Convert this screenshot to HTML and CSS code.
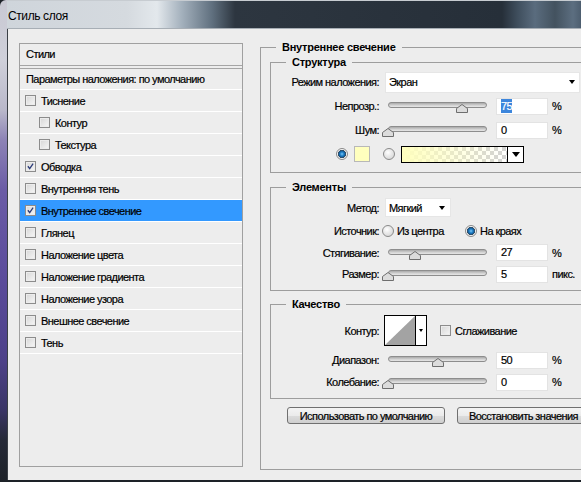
FILE: index.html
```html
<!DOCTYPE html>
<html lang="ru">
<head>
<meta charset="utf-8">
<title>Стиль слоя</title>
<link rel="stylesheet" href="styles.css">
</head>
<body>
<div class="window">
  <div class="frame-left"></div>
  <div class="main">
    <div class="titlebar"><span class="title">Стиль слоя</span></div>
    <div class="client">
      <div class="styles-panel">
        <div class="styles-head">Стили</div>
        <ul class="styles-list">
          <li class="row blend">Параметры наложения: по умолчанию</li>
          <li class="row"><span class="cb"></span>Тиснение</li>
          <li class="row sub"><span class="cb"></span>Контур</li>
          <li class="row sub"><span class="cb"></span>Текстура</li>
          <li class="row"><span class="cb"><svg viewBox="0 0 11 11"><path d="M2.3 5.2l2.2 2.8 4.2-6"/></svg></span>Обводка</li>
          <li class="row"><span class="cb"></span>Внутренняя тень</li>
          <li class="row selected"><span class="cb"><svg viewBox="0 0 11 11"><path d="M2.3 5.2l2.2 2.8 4.2-6"/></svg></span>Внутреннее свечение</li>
          <li class="row"><span class="cb"></span>Глянец</li>
          <li class="row"><span class="cb"></span>Наложение цвета</li>
          <li class="row"><span class="cb"></span>Наложение градиента</li>
          <li class="row"><span class="cb"></span>Наложение узора</li>
          <li class="row"><span class="cb"></span>Внешнее свечение</li>
          <li class="row"><span class="cb"></span>Тень</li>
        </ul>
      </div>

      <fieldset class="effect">
        <legend>Внутреннее свечение</legend>

        <fieldset class="group structure">
          <legend>Структура</legend>
          <div class="frow">
            <span class="lbl">Режим наложения:</span>
            <div class="select wide"><span>Экран</span><i class="arrow"></i></div>
          </div>
          <div class="frow">
            <span class="lbl">Непрозр.:</span>
            <div class="slider" style="--v:75"><div class="track"></div><svg class="thumb" viewBox="0 0 12 9"><path d="M6 .5l5.5 4v4H.5v-4z"/></svg></div>
            <div class="num"><span class="hl">75</span></div>
            <span class="unit">%</span>
          </div>
          <div class="frow">
            <span class="lbl">Шум:</span>
            <div class="slider" style="--v:0"><div class="track"></div><svg class="thumb" viewBox="0 0 12 9"><path d="M6 .5l5.5 4v4H.5v-4z"/></svg></div>
            <div class="num">0</div>
            <span class="unit">%</span>
          </div>
          <div class="frow colors">
            <span class="radio on"></span>
            <span class="swatch"></span>
            <span class="radio gap"></span>
            <div class="grad"><div class="grad-fill"></div><div class="grad-drop"><i class="arrow big"></i></div></div>
          </div>
        </fieldset>

        <fieldset class="group elements">
          <legend>Элементы</legend>
          <div class="frow">
            <span class="lbl">Метод:</span>
            <div class="select short"><span>Мягкий</span><i class="arrow"></i></div>
          </div>
          <div class="frow">
            <span class="lbl">Источник:</span>
            <label class="opt first"><span class="radio"></span><span class="opt-text">Из центра</span></label>
            <label class="opt"><span class="radio on"></span><span class="opt-text">На краях</span></label>
          </div>
          <div class="frow">
            <span class="lbl">Стягивание:</span>
            <div class="slider" style="--v:27"><div class="track"></div><svg class="thumb" viewBox="0 0 12 9"><path d="M6 .5l5.5 4v4H.5v-4z"/></svg></div>
            <div class="num">27</div>
            <span class="unit">%</span>
          </div>
          <div class="frow">
            <span class="lbl">Размер:</span>
            <div class="slider" style="--v:0"><div class="track"></div><svg class="thumb" viewBox="0 0 12 9"><path d="M6 .5l5.5 4v4H.5v-4z"/></svg></div>
            <div class="num">5</div>
            <span class="unit">пикс.</span>
          </div>
        </fieldset>

        <fieldset class="group quality">
          <legend>Качество</legend>
          <div class="frow">
            <span class="lbl">Контур:</span>
            <div class="contour">
              <svg class="curve" viewBox="0 0 30 29"><path d="M0 29L30 0v29z"/></svg>
              <div class="contour-drop"><i class="arrow tiny"></i></div>
            </div>
            <span class="cb smooth"></span>
            <span class="cb-text">Сглаживание</span>
          </div>
          <div class="frow">
            <span class="lbl">Диапазон:</span>
            <div class="slider" style="--v:50"><div class="track"></div><svg class="thumb" viewBox="0 0 12 9"><path d="M6 .5l5.5 4v4H.5v-4z"/></svg></div>
            <div class="num">50</div>
            <span class="unit">%</span>
          </div>
          <div class="frow">
            <span class="lbl">Колебание:</span>
            <div class="slider" style="--v:0"><div class="track"></div><svg class="thumb" viewBox="0 0 12 9"><path d="M6 .5l5.5 4v4H.5v-4z"/></svg></div>
            <div class="num">0</div>
            <span class="unit">%</span>
          </div>
        </fieldset>

        <div class="buttons">
          <button class="btn default">Использовать по умолчанию</button>
          <button class="btn reset">Восстановить значения</button>
        </div>
      </fieldset>
    </div>
  </div>
</div>
</body>
</html>
```

FILE: styles.css
```css
* { box-sizing: border-box; }

html, body { margin: 0; padding: 0; }

body {
  width: 581px;
  height: 482px;
  overflow: hidden;
  background: #1d2228;
  font-family: "Liberation Sans", Arial, sans-serif;
  font-size: 11px;
  letter-spacing: -0.55px;
  color: #000;
  -webkit-text-stroke: 0.2px #000;
}

.window {
  display: flex;
  width: 581px;
  height: 482px;
}

/* Aero frame strip on the left edge */
.frame-left {
  width: 7px;
  flex: none;
  border-top-left-radius: 6px;
  background: linear-gradient(#c9c9d3 0, #cfd0da 60px, #b9b8ca 110px, #8d83b6 140px, #6b5ca6 190px, #5a4b9b 280px, #4d4189 360px, #3a3566 410px, #262a38 440px, #1d2228 482px);
}

.main {
  flex: 1;
  min-width: 0;
  display: flex;
  flex-direction: column;
}

.titlebar {
  height: 29px;
  flex: none;
  display: flex;
  align-items: center;
  padding: 2px 0 0 1px;
  border-top: 1px solid #c7ccd1;
  border-bottom: 1px solid #a7aeb5;
  background:
    linear-gradient(to right, #cfd5db 0, #d5dadf 120px, #e3e8ec 150px, #a3b0bc 175px, #60707f 205px, #2d3640 228px, #262f39 495px, #3e4d5c 510px, #5a6c7e 528px, #43525f 548px, #5c6e80 566px, #4d5e6f 574px);
}

.title {
  font-size: 12px;
  letter-spacing: -0.4px;
  color: #000;
  -webkit-text-stroke: 0;
}

.client {
  height: 451px;
  flex: none;
  display: flex;
  align-items: flex-start;
  padding: 11px 0 0 11px;
  border-left: 1px solid #3b4046;
  background: #ededed;
  overflow: hidden;
}

/* ---------- left list of effects ---------- */
.styles-panel {
  width: 224px;
  height: 424px;
  flex: none;
  margin-top: 3px;
  border: 1px solid #a0a0a0;
}

.styles-head {
  height: 22px;
  line-height: 21px;
  padding-left: 6px;
  border-bottom: 1px solid #a5a5a5;
}

.styles-list {
  list-style: none;
  margin: 2px 0 0;
  padding: 0;
  border-top: 1px solid #a5a5a5;
}

.row {
  height: 22px;
  display: flex;
  align-items: center;
  padding-left: 5px;
  border-bottom: 1px solid #fff;
}

.row.blend { height: 21px; padding-left: 6px; }
.row.sub { padding-left: 19px; }
.row.selected { background: #3399ff; }

.cb {
  width: 11px;
  height: 11px;
  flex: none;
  margin-right: 5px;
  border: 1px solid #8c8c8c;
  background: linear-gradient(135deg, #d6d6d6, #f7f7f7);
  box-shadow: inset 0 0 0 1px #ececec;
  display: flex;
}

.cb svg {
  width: 9px;
  height: 9px;
  fill: none;
  stroke: #2b3b78;
  stroke-width: 1.6;
}

/* ---------- right side groups ---------- */
fieldset {
  margin: 0;
  padding: 0;
  min-width: 0;
  border: 1px solid #9d9d9d;
}

legend {
  margin-left: 15px;
  padding: 0 6px;
  font-weight: bold;
  line-height: 15px;
  letter-spacing: -0.25px;
  color: #000;
  -webkit-text-stroke: 0;
}

.effect {
  flex: none;
  width: 345px;
  height: 430px;
  margin-left: 17px;
}

.group {
  margin: 0 9px;
  padding: 0 0 5px;
}

.structure { padding-bottom: 6px; }
.elements { margin-top: 7px; }
.quality { margin-top: 6px; }

.frow {
  display: flex;
  align-items: center;
  height: 24px;
}

.elements .frow:nth-of-type(1) { height: 25px; }
.elements .frow:nth-of-type(2) { height: 22px; }
.elements .frow:nth-of-type(3) { height: 21px; }
.elements .frow:nth-of-type(4) { height: 22px; }

.quality .frow { height: 22px; }
.quality .frow:nth-of-type(1) { height: 37px; }

.lbl {
  width: 108px;
  flex: none;
  text-align: right;
}

.select {
  height: 21px;
  margin-left: 6px;
  display: flex;
  align-items: center;
  padding: 0 4px 0 3px;
  background: #fff;
  border: 1px solid #e6e6e6;
  flex: none;
}

.select span { flex: 1; }
.select.wide { width: 195px; }
.select.short { width: 66px; height: 19px; padding-right: 5px; }

.arrow {
  width: 0;
  height: 0;
  border-left: 3.5px solid transparent;
  border-right: 3.5px solid transparent;
  border-top: 4px solid #000;
}

.arrow.big {
  border-left-width: 4.5px;
  border-right-width: 4.5px;
  border-top-width: 5px;
}

.arrow.tiny {
  border-left-width: 2.5px;
  border-right-width: 2.5px;
  border-top-width: 3px;
}

/* slider: rounded track with a pointer below it */
.slider {
  position: relative;
  width: 105px;
  height: 11px;
  margin: 3px 0 0 6px;
  flex: none;
}

.track {
  height: 6px;
  margin: 0 3px;
  border: 1px solid #8d8d8d;
  border-radius: 3px;
  background: linear-gradient(#a9a9a9, #d4d4d4 60%, #e6e6e6);
}

.thumb {
  position: absolute;
  top: 2px;
  left: calc(3px + var(--v) * 0.99px - 6px);
  width: 12px;
  height: 9px;
  overflow: visible;
}

.thumb path {
  fill: #dcdcdc;
  stroke: #6e6e6e;
  stroke-width: 1;
}

.num {
  width: 52px;
  height: 17px;
  margin-left: 6px;
  flex: none;
  padding-left: 4px;
  line-height: 15px;
  background: #fff;
  border: 1px solid #e3e3e3;
}

.hl {
  background: #3d86dc;
  color: #fff;
  -webkit-text-stroke: 0.2px #fff;
  padding: 1px 0;
}

.unit { margin-left: 4px; }

/* colour choice row */
.colors { padding-left: 65px; }

.radio {
  width: 12px;
  height: 12px;
  flex: none;
  border-radius: 50%;
  border: 1px solid #8a8a8a;
  background: radial-gradient(circle at 40% 35%, #fff 0, #eaeaea 40%, #cfcfcf 100%);
}

.radio.on {
  background: radial-gradient(circle at 50% 50%, #7fc8f3 0, #2a8ad0 1.6px, #0f5692 3.2px, #3a4c5c 3.8px, #f6f6f6 4.4px, #dcdcdc 100%);
}

.radio.gap { margin-left: 13px; }

.swatch {
  width: 16px;
  height: 16px;
  margin-left: 6px;
  flex: none;
  background: #ffffbe;
  border: 1px solid #b8b8b8;
}

.grad {
  width: 123px;
  height: 17px;
  margin-left: 6px;
  flex: none;
  display: flex;
  border: 1px solid #000;
  background: #fff;
}

.grad-fill {
  flex: 1;
  background:
    linear-gradient(to right, #ffffbe, rgba(255, 255, 190, 0)),
    conic-gradient(#d2d2d2 25%, #fff 0 50%, #d2d2d2 0 75%, #fff 0) 0 0 / 8px 8px;
}

.grad-drop {
  width: 16px;
  flex: none;
  border-left: 1px solid #000;
  display: flex;
  align-items: center;
  justify-content: center;
}

/* source radio options */
.opt {
  display: flex;
  align-items: center;
}

.opt.first {
  width: 83px;
  margin-left: 3px;
}

.opt-text { margin-left: 3px; }

/* contour picker */
.contour {
  width: 43px;
  height: 31px;
  margin-left: 5px;
  flex: none;
  display: flex;
  border: 1px solid #000;
  background: #fff;
}

.curve {
  width: 30px;
  height: 29px;
  display: block;
}

.curve path { fill: #a3a3a3; }

.contour-drop {
  flex: 1;
  border-left: 1px solid #000;
  display: flex;
  align-items: center;
  justify-content: center;
}

.cb.smooth {
  margin: 0 4px 0 13px;
}

/* bottom buttons */
.buttons {
  display: flex;
  gap: 12px;
  margin: 8px 0 0 26px;
}

.btn {
  height: 17px;
  padding: 0;
  font: inherit;
  letter-spacing: inherit;
  color: #000;
  -webkit-text-stroke: 0.2px #000;
  border: 1px solid #707070;
  border-radius: 3px;
  background: linear-gradient(#f4f4f4, #ebebeb 50%, #dcdcdc 51%, #cfcfcf);
  flex: none;
}

.btn.default { width: 158px; }
.btn.reset { width: 133px; }
```
